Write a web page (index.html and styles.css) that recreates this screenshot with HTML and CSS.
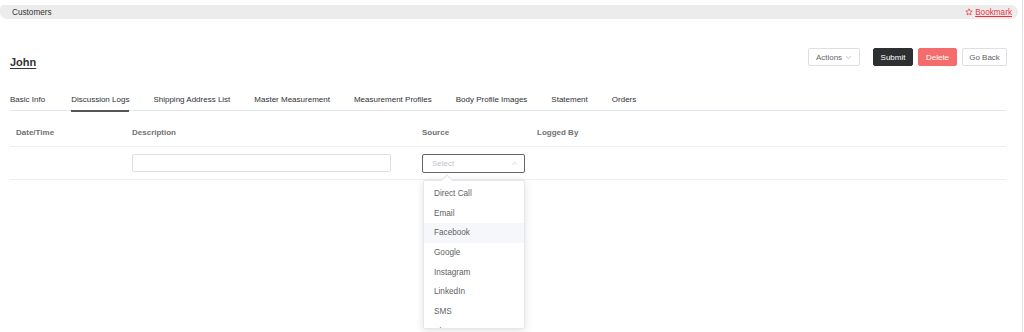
FILE: index.html
```html
<!DOCTYPE html>
<html lang="en">
<head>
<meta charset="utf-8">
<title>Customers - John</title>
<link rel="stylesheet" href="styles.css">
</head>
<body>
<div class="page">
  <div class="breadcrumb">
    <span class="crumb">Customers</span>
    <a class="bookmark" href="#"><svg class="star" viewBox="0 0 24 24" width="8" height="8"><path d="M12 2.5l2.9 6.1 6.6.8-4.9 4.6 1.3 6.6L12 17.3l-5.9 3.3 1.3-6.6-4.9-4.6 6.6-.8z" fill="none" stroke="currentColor" stroke-width="2.2" stroke-linejoin="round"/></svg> Bookmark</a>
  </div>
  <div class="content">
    <div class="header">
      <h1 class="title">John</h1>
      <div class="actions">
        <button class="btn btn-default btn-actions">Actions <svg viewBox="0 0 12 12" width="7" height="7"><path d="M2 4l4 4 4-4" fill="none" stroke="currentColor" stroke-width="1.1"/></svg></button>
        <button class="btn btn-dark">Submit</button>
        <button class="btn btn-danger">Delete</button>
        <button class="btn btn-default btn-back">Go Back</button>
      </div>
    </div>
    <nav class="tabs">
      <span class="tab first">Basic Info</span>
      <span class="tab active">Discussion Logs</span>
      <span class="tab">Shipping Address List</span>
      <span class="tab">Master Measurement</span>
      <span class="tab">Measurement Profiles</span>
      <span class="tab">Body Profile Images</span>
      <span class="tab">Statement</span>
      <span class="tab">Orders</span>
    </nav>
    <div class="table">
      <div class="row head">
        <div class="cell">Date/Time</div>
        <div class="cell">Description</div>
        <div class="cell">Source</div>
        <div class="cell">Logged By</div>
      </div>
      <div class="row body">
        <div class="cell"></div>
        <div class="cell"><div class="input"></div></div>
        <div class="cell">
          <div class="select-wrap">
            <div class="select"><span class="placeholder">Select</span><svg viewBox="0 0 12 12" width="7" height="7"><path d="M2 8l4-4 4 4" fill="none" stroke="currentColor" stroke-width="1.1"/></svg></div>
            <div class="dropdown">
              <span class="arrow"></span>
              <ul class="options">
                <li>Direct Call</li>
                <li>Email</li>
                <li class="hover">Facebook</li>
                <li>Google</li>
                <li>Instagram</li>
                <li>LinkedIn</li>
                <li>SMS</li>
                <li>Skype</li>
                <li>Twitter</li>
              </ul>
            </div>
          </div>
        </div>
        <div class="cell"></div>
      </div>
    </div>
  </div>
</div>
</body>
</html>
```
FILE: styles.css
```css
* { box-sizing: border-box; }
html, body { margin: 0; padding: 0; background: #fff; }
body {
  font-family: "Liberation Sans", Arial, sans-serif;
  font-size: 8px;
  color: #303133;
  overflow: hidden;
}
.page {
  width: 1023px;
  height: 332px;
  border-right: 1px solid #e2e2e2;
  padding-top: 5px;
}
.breadcrumb {
  width: 1018px;
  height: 14px;
  background: #ececec;
  border-radius: 4px 7px 7px 7px;
  display: flex;
  align-items: center;
  justify-content: space-between;
  padding: 0 6px 0 12px;
}
.crumb { color: #333; font-size: 8.2px; }
.bookmark {
  color: #f0303a;
  text-decoration: underline;
  font-size: 8.2px;
  display: flex;
  align-items: center;
  gap: 1px;
}
.star { margin-right: 1px; }
.content { padding: 0 16px 0 10px; }
.header {
  display: flex;
  justify-content: space-between;
  align-items: flex-start;
  padding-top: 29px;
}
.title {
  margin: 8px 0 0;
  font-size: 11px;
  line-height: 13px;
  font-weight: bold;
  color: #333;
  text-decoration: underline;
  text-underline-offset: 2px;
}
.actions { display: flex; gap: 5px; margin-right: -1px; }
.btn {
  height: 18px;
  font-family: inherit;
  font-size: 8px;
  border-radius: 2px;
  border: 1px solid #dcdfe6;
  background: #fff;
  color: #606266;
  padding: 0;
  display: flex;
  align-items: center;
  justify-content: center;
  cursor: pointer;
}
.btn-actions { width: 52px; gap: 3px; margin-right: 8px; color: #666; }
.btn-actions svg { color: #999; }
.btn-dark { width: 40px; background: #2e2f31; border-color: #2e2f31; color: #fff; }
.btn-danger { width: 39px; background: #f46c6c; border-color: #f46c6c; color: #fff; }
.btn-back { width: 45px; }
.tabs {
  margin-top: 19px;
  display: flex;
  border-bottom: 1px solid #e4e6ef;
  height: 23px;
}
.tab {
  height: 24px;
  line-height: 23px;
  padding: 0 12px;
  border-bottom: 2px solid transparent;
  color: #303133;
  font-size: 8px;
  white-space: nowrap;
}
.tab.first { padding-left: 0; padding-right: 14px; }
.tab.active { border-bottom-color: #555; margin-left: 12px; padding: 0; margin-right: 12px; }
.table { width: 100%; }
.row {
  display: grid;
  grid-template-columns: 116px 290px 115px 1fr;
  border-bottom: 1px solid #efefef;
}
.cell { padding: 0 6px; }
.head .cell {
  padding-top: 16px;
  padding-bottom: 8px;
  line-height: 11px;
  font-weight: bold;
  color: #707173;
}
.body .cell { padding-top: 7px; padding-bottom: 6px; height: 32px; }
.input {
  width: 259px;
  height: 18px;
  border: 1px solid #dcdfe6;
  border-radius: 2px;
}
.select-wrap { position: relative; width: 103px; }
.select {
  height: 19px;
  border: 1px solid #666;
  border-radius: 2px;
  display: flex;
  align-items: center;
  justify-content: space-between;
  padding: 0 6px 0 9px;
  color: #c0c4cc;
}
.placeholder { color: #c0c4cc; }
.dropdown {
  position: absolute;
  top: 26px;
  left: 1px;
  width: 102px;
  height: 149px;
  background: #fff;
  border: 1px solid #e4e7ed;
  border-radius: 2px;
  box-shadow: 0 2px 8px rgba(0, 0, 0, 0.12);
  z-index: 10;
}
.arrow {
  position: absolute;
  top: -5px;
  left: 19px;
  width: 8px;
  height: 8px;
  background: #fff;
  border-left: 1px solid #e4e7ed;
  border-top: 1px solid #e4e7ed;
  transform: rotate(45deg);
}
.options {
  list-style: none;
  margin: 0;
  padding: 3px 0 0;
  height: 147px;
  overflow: hidden;
  position: relative;
}
.options li {
  height: 19.67px;
  line-height: 19.67px;
  padding-left: 10px;
  color: #606266;
  font-size: 8.2px;
}
.options li.hover { background: #f5f7fa; }
```
